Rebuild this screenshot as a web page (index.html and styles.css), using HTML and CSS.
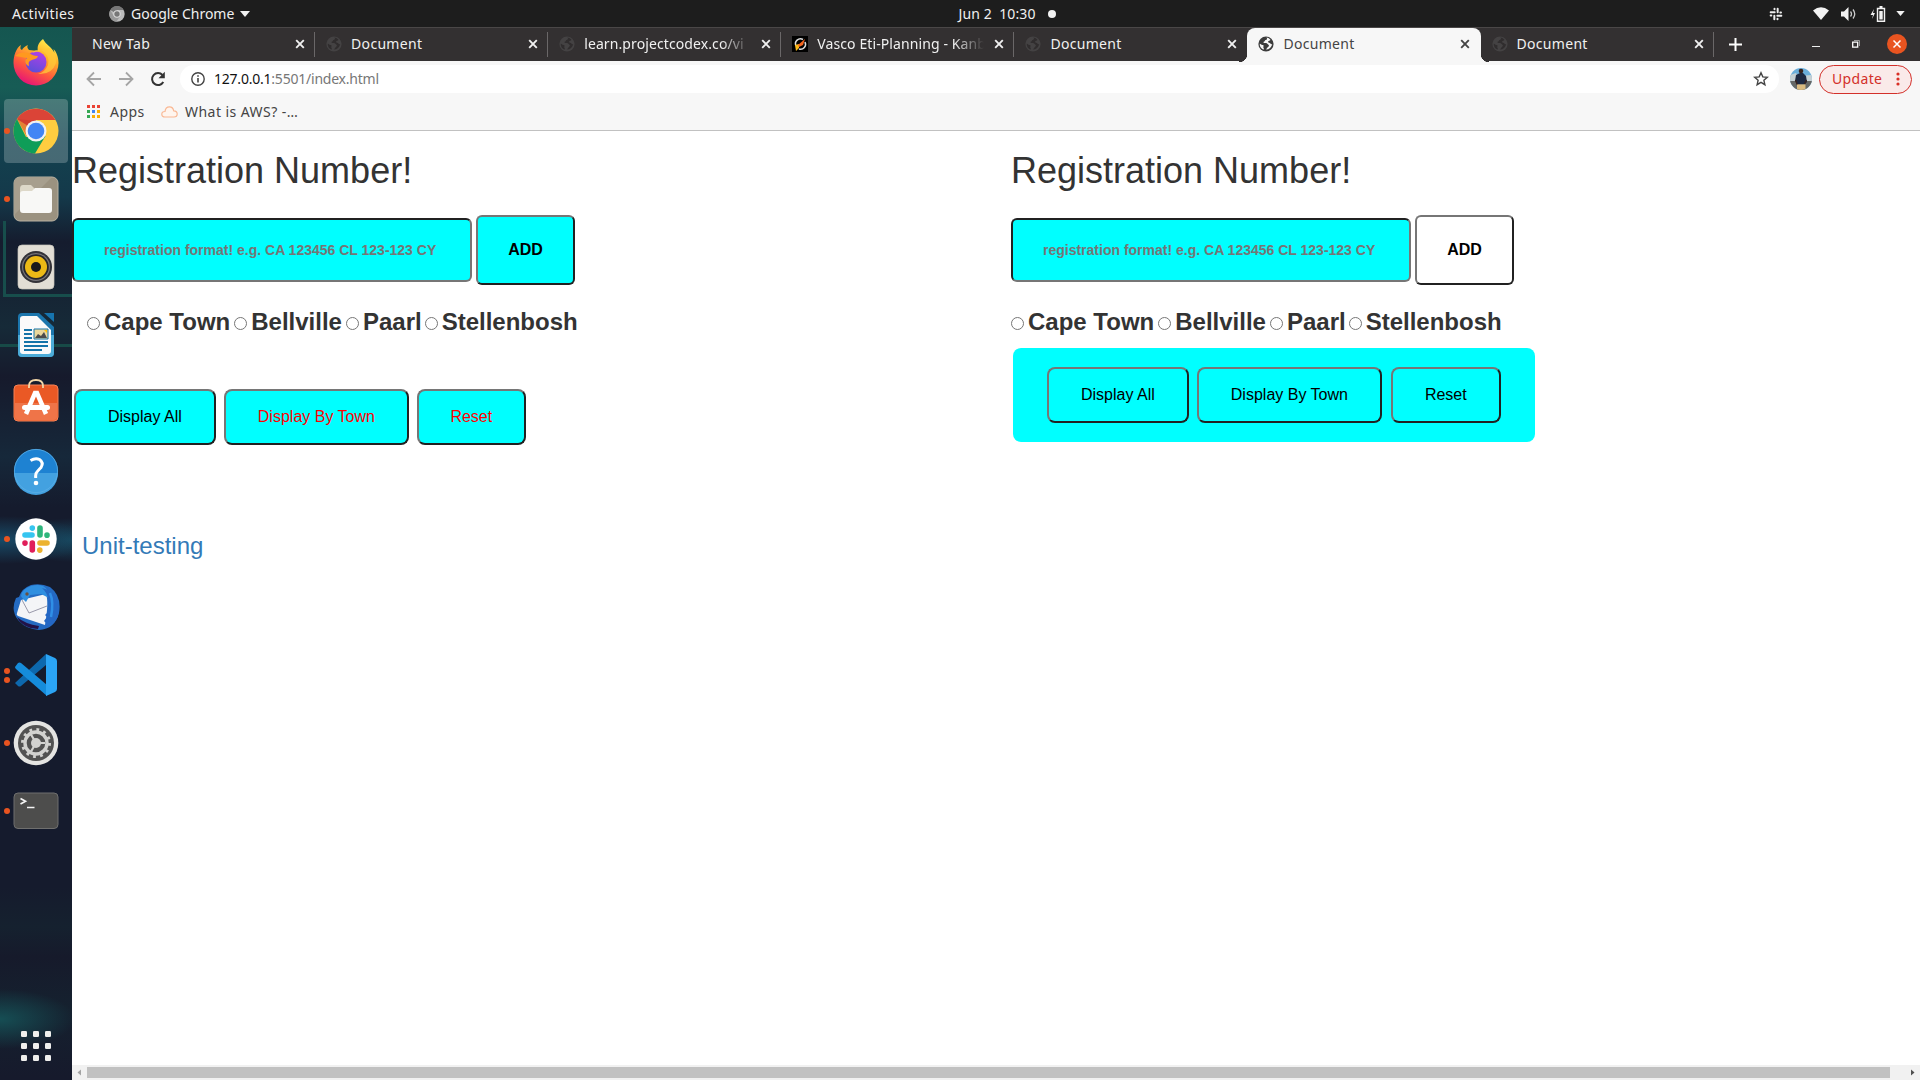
FILE: index.html
```html
<!DOCTYPE html>
<html lang="en">
<head>
<meta charset="utf-8">
<title>Document</title>
<link rel="stylesheet" href="styles.css">
</head>
<body>
<svg class="defs" width="0" height="0">
  <symbol id="globe" viewBox="0 0 16 16"><circle cx="8" cy="8" r="7.6"/><path class="land" d="M8.2 1.6c1.6 1 .7 2.1-.6 2.5-.9.3-.5 1.3-1.4 1.5-1 .2-.8 1.2-.2 1.3 1.5.1 1.6-.2 2.8.4 1 .5.9 1.3 1.7 1.5.8.3.3 1.7-.8 2.4-.8.5-.8 1.7-1.9 2.3A6.3 6.3 0 0 0 14.2 8c-.8.5-1.3.2-1.8-.5-.6-.8-2.2-.4-2.3-1.5 0-.9.9-1.3 1.7-1.4.5 0 .4-.8.5-1.1A6.3 6.3 0 0 0 8.2 1.6zM1.7 7.8c1.4.3 1.4 1.2 2.7 1.2 1.3.1 1.5.9.9 1.7-.5.7.7 1 .5 2.200-.1.7-.5.8-.6.7A6.3 6.3 0 0 1 1.7 7.8z"/></symbol>
  <symbol id="x" viewBox="0 0 12 12"><path d="M2.2 2.2l7.6 7.6M9.8 2.2l-7.600 7.600" fill="none" stroke="currentColor" stroke-width="1.900"/></symbol>
</svg>

<header class="topbar">
  <div class="topbar-left">
    <span class="activities">Activities</span>
    <svg width="16" height="16" viewBox="0 0 48 48"><circle cx="24" cy="24" r="23" fill="#bbb"/><path d="M24 24L4 12A23 23 0 0 1 44 12H24z" fill="#777"/><path d="M4 12A23 23 0 0 0 22 47L34 30 14 30z" fill="#999"/><circle cx="24" cy="24" r="11" fill="#ddd"/><circle cx="24" cy="24" r="8" fill="#777"/></svg>
    <span class="appname">Google Chrome</span>
    <svg class="caret" width="10" height="6" viewBox="0 0 10 6"><path d="M0 0h10L5 6z" fill="#f2f2f2"/></svg>
  </div>
  <div class="clock"><span>Jun 2&nbsp; 10:30</span><i></i></div>
  <div class="tray">
    <svg width="14" height="14" viewBox="3 3 42 42" fill="none" stroke="#eee" stroke-width="6" stroke-linecap="round"><path d="M8 19h12M19.500 8v2M29 8v11M39 19.500h-2M28 29h12M28.500 40v-2M19 29v11M8 28.500h2"/></svg>
    <svg class="wifi" width="16" height="13" viewBox="0 0 16 13"><path d="M0 3.500Q8-3 16 3.500L8 13z" fill="#f2f2f2"/></svg>
    <svg class="volume" width="16" height="14" viewBox="0 0 16 14"><path d="M0 4.500h3L7.500 0v14L3 9.500H0z" fill="#f2f2f2"/><path d="M9.500 4.500q2 2.500 0 5M12 2.500q3.500 4.500 0 9" fill="none" stroke="#ccc" stroke-width="1.300"/></svg>
    <svg class="battery" width="16" height="16" viewBox="0 0 16 16"><path d="M4 3L.5 9H3l-1 4 3-6H3z" fill="#f2f2f2"/><path d="M7.500 2.500h7v12.700h-7z" fill="none" stroke="#f2f2f2" stroke-width="1.400"/><path d="M9.500 0h3v2h-3zM9.300 5h3.400v8.500H9.300z" fill="#f2f2f2"/></svg>
    <svg class="caret" width="9" height="5" viewBox="0 0 10 6"><path d="M0 0h10L5 6z" fill="#f2f2f2"/></svg>
  </div>
</header>

<div class="desktop">
<nav class="dock">
  <div class="app"><svg viewBox="0 0 48 48"><defs><linearGradient id="ff" x1=".8" y1="0" x2=".3" y2="1"><stop offset="0" stop-color="#fff44f"/><stop offset=".35" stop-color="#ffb02a"/><stop offset=".65" stop-color="#ff5a3c"/><stop offset="1" stop-color="#e5107a"/></linearGradient><linearGradient id="fp" x1=".7" y1="0" x2=".3" y2="1"><stop offset="0" stop-color="#b13fe8"/><stop offset="1" stop-color="#5a4fd8"/></linearGradient></defs><path d="M31 0c-5 4-6 8-5 12l-9-1C15 9 15 7 16 6c-3 1-5 3-6 5-2-1-2-2-1-5C4 9 1.500 17 1.500 24a22.500 22.500 0 0 0 45 0c0-6-2-11-5-14l1 4C40 8 34 6 31 0z" fill="url(#ff)"/><circle cx="24" cy="23" r="10.500" fill="url(#fp)"/><path d="M3 17c4-4 9-4 14-3 3 2 5 3 9 3-1 4-6 3-8 5-2 1-1 3-1 5-4-1-5-6-2-8-4-1-8-1-12-2z" fill="#ff991f"/><path d="M20 14q5-6 12-1 6 5 4 13-3 7-10 9 14 1 18-11 1-10-7-15z" fill="#ffca3a" opacity=".75"/></svg></div>
  <div class="app active"><i class="run"></i><svg viewBox="0 0 48 48"><circle cx="24" cy="24" r="22.500" fill="#ffcd40"/><path d="M24 24L5 12A22.500 22.500 0 0 1 43.500 13H24z" fill="#db4437"/><path d="M5 12A22.500 22.500 0 0 0 23 46.500L33.500 29 14 30z" fill="#0f9d58"/><path d="M5 12L15 30 24 14z" fill="#c8382c" opacity=".5"/><circle cx="24" cy="24" r="10.500" fill="#f1f1f1"/><circle cx="24" cy="24" r="8.300" fill="#4285f4"/></svg></div>
  <div class="app"><i class="run"></i><svg viewBox="0 0 48 48"><rect x="2" y="2" width="44" height="44" rx="6" fill="#9b9280" stroke="#b9b2a2"/><path d="M2 40L40 2h-32q-6 0-6 6z" fill="#a79f8e"/><path d="M8 14q0-4 3-4h8l4 4h14v8H8z" fill="#ddd8c8"/><path d="M8 19q0-3 3-3h9l3-3h14q3 0 3 3v19q0 3-3 3H11q-3 0-3-3z" fill="#f8f8f6"/></svg></div>
  <div class="app"><svg viewBox="0 0 48 48"><rect x="6" y="2" width="36" height="44" rx="4" fill="#e2ded5" stroke="#c9c5bc" stroke-width=".7"/><circle cx="24" cy="24" r="16" fill="#333238"/><circle cx="24" cy="24" r="14" fill="#77757a"/><circle cx="24" cy="24" r="12.800" fill="#28262b"/><circle cx="24" cy="24" r="11" fill="#ecb916"/><circle cx="24" cy="24" r="5" fill="#18191c"/></svg></div>
  <div class="app"><svg viewBox="0 0 48 48"><path d="M10 2h17l15 14v26q0 4-4 4H10q-4 0-4-4V6q0-4 4-4z" fill="#1b76ad"/><path d="M6 24h36v18q0 4-4 4H10q-4 0-4-4z" fill="#4cacd8"/><path d="M32 2h10v9z" fill="#1674ae"/><path d="M11 5h14l14 14v21q0 3-3 3H11q-3 0-3-3V8q0-3 3-3z" fill="#fafafa"/><path d="M12 19h8M12 23h8M12 27h8M12 31h24M12 35h24M12 39h18" stroke="#1574a9" stroke-width="1.800"/><path d="M22 18h14v10H22z" fill="#ead79b" stroke="#1574a9"/><path d="M23 27l3-4 3 2 3-4 3 6z" fill="#4b4b4b"/><path d="M32 19h3v3z" fill="#ffc107"/></svg></div>
  <div class="app"><svg viewBox="0 0 48 48"><rect x="2" y="6" width="44" height="36" rx="4" fill="#ea5925" stroke="#f58257"/><path d="M3 24h42v14q0 3-3 3H6q-3 0-3-3z" fill="#ef7448"/><path d="M17 9V7q0-6 7-6t7 6v2" fill="none" stroke="#f4d7a8" stroke-width="1.800"/><path d="M14 35l9-21h2l9 21" fill="none" stroke="#fff" stroke-width="4.500"/><rect x="10" y="26" width="28" height="5" rx="2.500" fill="#fff"/></svg></div>
  <div class="app"><svg viewBox="0 0 48 48"><circle cx="24" cy="24" r="22" fill="#1e82d2"/><path d="M2 26h44a22 22 0 0 1-44 0z" fill="#43a1e0"/><circle cx="24" cy="24" r="21.600" fill="none" stroke="#5baee6" stroke-width=".8"/><path d="M18.500 13.500q5-3 9-1 4.500 3 1.500 8-4 4-5 6-.5 2-.3 4.500" fill="none" stroke="#fff" stroke-width="3"/><circle cx="24" cy="36" r="2.300" fill="#fff"/></svg></div>
  <div class="app"><i class="run"></i><svg viewBox="0 0 48 48"><circle cx="24" cy="24" r="20.700" fill="#fff"/><g stroke-width="5.600" stroke-linecap="round" fill="none"><path d="M13 20h7M20.300 13v.1" stroke="#36c5f0"/><path d="M28 13v7M35 20.100v.1" stroke="#2eb67d"/><path d="M28 28h7M27.800 35v.1" stroke="#ecb22e"/><path d="M20.300 28v7M13 28v.1" stroke="#e01e5a"/></g></svg></div>
  <div class="app"><svg viewBox="0 0 48 48"><path d="M4 15q-6 13 3 23 7 8 20 9 16-1 20-17Q50 13 38 4q-9-4-19-2-9 3-12 12z" fill="#246bc2"/><path d="M5 34q8 7 22 9l-1 3Q10 45 5 34z" fill="#221247"/><path d="M9 17l25-6q3 8-1 31L6 33q-2-1-1-3z" fill="#f4f5f7"/><path d="M10 17l7 13 18-7" fill="none" stroke="#99a" stroke-width="1"/><path d="M19 3q-9 3-10 10 1 2 5 6l4-7 11-1 8 4q1-8-6-12-5-2-12 0z" fill="#2f8fe0"/><path d="M30 5q9 8 6 24l-3 3 2 2-3 4 2 2-1 5q13-5 14-17Q47 9 30 5z" fill="#2467c4"/><path d="M38 10q4 9 1 24" fill="none" stroke="#2f8fe6" stroke-width="2.500"/><circle cx="15" cy="11" r="1.700" fill="#6b5140"/></svg></div>
  <div class="app"><i class="run two"></i><svg viewBox="0 0 48 48"><path d="M3 32l3 3q1.500 1 3 0L34 14V3z" fill="#0d68ad"/><path d="M3 16l3-4q1.500-1 3 0l26 22v11L4 18q-1-1-1-2z" fill="#158cdb"/><path d="M34 3l9 4q2 1 2 3v28q0 2-2 3l-9 4z" fill="#2ba4f4"/></svg></div>
  <div class="app"><i class="run"></i><svg viewBox="0 0 48 48"><circle cx="24" cy="24" r="22.300" fill="#e4e4e2"/><circle cx="24" cy="24" r="18" fill="#525252"/><circle cx="24" cy="24" r="11" fill="none" stroke="#d2d2d0" stroke-width="3.400"/><circle cx="24" cy="24" r="13.500" fill="none" stroke="#d2d2d0" stroke-width="3" stroke-dasharray="2.800 4.270"/><path d="M24 24h9M24 24l-5-8.500M24 24l-5 8.500" stroke="#d2d2d0" stroke-width="2.200"/><circle cx="24" cy="24" r="5" fill="#d2d2d0"/></svg></div>
  <div class="app"><i class="run"></i><svg viewBox="0 0 48 48"><rect x="2" y="6" width="44" height="35.500" rx="4" fill="#4d4d4c" stroke="#6f6f6e"/><path d="M8.500 11.500l5 2.800-5 2.800M15 20.500h7.500" fill="none" stroke="#f4f4f4" stroke-width="1.700"/></svg></div>
  <div class="app grid"><svg viewBox="0 0 48 48" fill="#efefed"><g id="r"><rect x="9" y="9" width="6" height="6" rx="1.300"/><rect x="21" y="9" width="6" height="6" rx="1.300"/><rect x="33" y="9" width="6" height="6" rx="1.300"/></g><use href="#r" y="12"/><use href="#r" y="24"/></svg></div>
</nav>

<main class="browser">
  <div class="tabs">
    <div class="tab"><span>New Tab</span><svg class="close"><use href="#x"/></svg></div>
    <div class="tab"><svg class="fav"><use href="#globe"/></svg><span>Document</span><svg class="close"><use href="#x"/></svg></div>
    <div class="tab"><svg class="fav"><use href="#globe"/></svg><span class="fade tight">learn.projectcodex.co/vi</span><svg class="close"><use href="#x"/></svg></div>
    <div class="tab"><svg class="fav" viewBox="0 0 16 16"><path d="M0 0h16v16H0z" fill="#000"/><path d="M4 10A5 5 0 0 1 11 3.500M13 6A5 5 0 0 1 7 13" fill="none" stroke="#ddd" stroke-width="1.500"/><path d="M3 9l4-1v4l-3 3z" fill="#fbb917"/><path d="M6 9l7-6-2 6-4 2z" fill="#f4641e"/></svg><span class="fade tight">Vasco Eti-Planning - Kanb</span><svg class="close"><use href="#x"/></svg></div>
    <div class="tab last"><svg class="fav"><use href="#globe"/></svg><span>Document</span><svg class="close"><use href="#x"/></svg></div>
    <div class="tab current"><svg class="fav"><use href="#globe"/></svg><span>Document</span><svg class="close"><use href="#x"/></svg></div>
    <div class="tab"><svg class="fav"><use href="#globe"/></svg><span>Document</span><svg class="close"><use href="#x"/></svg></div>
    <svg class="plus" width="13" height="13" viewBox="0 0 13 13"><path d="M6.500 0v13M0 6.500h13" stroke="#fff" stroke-width="2"/></svg>
    <div class="controls">
      <svg width="8" height="20" viewBox="0 0 8 20"><path d="M0 12.500h8" stroke="#eee"/></svg>
      <svg width="8" height="8" viewBox="0 0 8 8" fill="none"><path d="M.7 2.200h5v5h-5z" stroke="#fff" stroke-width="1.300"/><path d="M2 .5h5.500V6" stroke="#999"/></svg>
      <svg width="20" height="20" viewBox="0 0 20 20"><circle cx="10" cy="10" r="10" fill="#e95420"/><path d="M6.500 6.500l7 7M13.500 6.500l-7 7" stroke="#fff" stroke-width="1.500"/></svg>
    </div>
  </div>
  <div class="toolbar">
    <svg class="nav" viewBox="0 0 16 16"><path d="M15 8H2M8 1.500L1.500 8 8 14.500" stroke="#a5a5a5"/></svg>
    <svg class="nav" viewBox="0 0 16 16"><path d="M1 8h13M8 1.500L14.500 8 8 14.500" stroke="#a5a5a5"/></svg>
    <svg class="nav" viewBox="0 0 16 16"><path d="M13.300 11A6 6 0 1 1 12.500 4" stroke="#333" stroke-width="2"/><path d="M14.800.8v6.400H8.500z" fill="#333"/></svg>
    <div class="omnibox">
      <svg width="14" height="14" viewBox="0 0 14 14"><circle cx="7" cy="7" r="6.200" fill="none" stroke="#444" stroke-width="1.400"/><path d="M7 6v4.500M7 3.300v1.500" stroke="#444" stroke-width="1.600"/></svg>
      <span class="url"><b>127.0.0.1</b>:5501/index.html</span>
      <svg width="16" height="16" viewBox="0 0 16 16"><path d="M8 1.800l1.800 4.100 4.500.4-3.400 3 1 4.400L8 11.400l-3.900 2.300 1-4.400-3.400-3 4.500-.4z" fill="none" stroke="#444" stroke-width="1.400"/></svg>
    </div>
    <svg class="avatar" width="22" height="22" viewBox="0 0 22 22"><defs><clipPath id="ac"><circle cx="11" cy="11" r="11"/></clipPath></defs><g clip-path="url(#ac)"><path d="M0 0h22v22H0z" fill="#6aaedb"/><path d="M0 7l6-2 2 3 14-1v8H0z" fill="#c5d0d4"/><path d="M0 13h22v9H0z" fill="#656765"/><path d="M6 7l4-2h3l3 3 1 6-2 2H7l-2-3z" fill="#1d2942"/><path d="M5.500 12l2 5M16.500 12l-2 4" stroke="#38241f" stroke-width="1.500"/><circle cx="11" cy="3" r="2.300" fill="#38241f"/><path d="M7 16.500h8.500V22H7z" fill="#d9ba80"/></g></svg>
    <div class="update"><span>Update</span><svg width="4" height="14" viewBox="0 0 4 14" fill="#d93025"><circle cx="2" cy="2" r="1.600"/><circle cx="2" cy="7" r="1.600"/><circle cx="2" cy="12" r="1.600"/></svg></div>
  </div>
  <div class="bookmarks">
    <svg width="13" height="13" viewBox="0 0 13 13"><path d="M0 0h3v3H0zM5 0h3v3H5zM10 0h3v3h-3z" fill="#ea4335"/><path d="M0 5h3v3H0zM0 10h3v3H0z" fill="#34a853"/><path d="M5 5h3v3H5z" fill="#4285f4"/><path d="M10 5h3v3h-3zM5 10h3v3H5zM10 10h3v3h-3z" fill="#fbad05"/></svg>
    <span class="bm-apps">Apps</span>
    <svg width="17" height="12" viewBox="0 0 17 12"><path d="M4 11Q.8 11 .8 8.200T4 5.500Q4.500.8 8.500.8q3.500 0 4.200 4 3.500.2 3.500 3.200t-3.200 3z" fill="#fff5ee" stroke="#f9b894" stroke-width="1.200"/></svg>
    <span class="bm-aws">What is AWS? -…</span>
  </div>

  <div class="page">
    <section class="col">
      <h1>Registration Number!</h1>
      <div class="entry"><input class="reg" type="text" placeholder="registration format! e.g. CA 123456 CL 123-123 CY"><button class="add">ADD</button></div>
      <div class="towns inset"><input type="radio" name="a"><span>Cape Town</span><input type="radio" name="a"><span>Bellville</span><input type="radio" name="a"><span>Paarl</span><input type="radio" name="a"><span>Stellenbosh</span></div>
      <div class="actions"><button>Display All</button><button class="red">Display By Town</button><button class="red reset">Reset</button></div>
      <a class="unit">Unit-testing</a>
    </section>
    <section class="col">
      <h1>Registration Number!</h1>
      <div class="entry"><input class="reg" type="text" placeholder="registration format! e.g. CA 123456 CL 123-123 CY"><button class="add white">ADD</button></div>
      <div class="towns"><input type="radio" name="b"><span>Cape Town</span><input type="radio" name="b"><span>Bellville</span><input type="radio" name="b"><span>Paarl</span><input type="radio" name="b"><span>Stellenbosh</span></div>
      <div class="actions panel"><button>Display All</button><button>Display By Town</button><button class="reset">Reset</button></div>
    </section>
  </div>
  <div class="scrollbar">
    <svg width="15" height="15" viewBox="0 0 15 15"><path d="M9 4.500v6L5.500 7.500z" fill="#a3a3a3"/></svg>
    <div class="thumb"></div>
    <svg width="15" height="15" viewBox="0 0 15 15"><path d="M6 4.500v6L9.500 7.500z" fill="#505050"/></svg>
  </div>
</main>
</div>
</body>
</html>
```
FILE: styles.css
```css
* { box-sizing: border-box; }
body {
  margin: 0;
  width: 1920px;
  height: 1080px;
  overflow: hidden;
  display: flex;
  flex-direction: column;
  background: #fff;
  font: 14px/20px "Noto Sans", sans-serif;
}
svg { display: block; flex: none; }
.defs { position: absolute; }

/* system bar */
.topbar {
  height: 27px;
  flex: none;
  display: grid;
  grid-template-columns: 1fr auto 1fr;
  align-items: center;
  background: #1d1d1d;
  color: #f0f0f0;
}
.topbar-left { display: flex; align-items: center; padding-left: 12px; }
.activities { width: 97px; letter-spacing: .4px; }
.appname { width: 104px; margin: 0 5px 0 6px; white-space: nowrap; }
.clock { display: flex; align-items: center; gap: 12px; padding-left: 95px; width: 193px; white-space: nowrap; }
.clock span { width: 77px; letter-spacing: .1px; }
.clock i { width: 8px; height: 8px; flex: none; border-radius: 50%; background: #f2f2f2; }
.tray { display: flex; align-items: center; justify-content: flex-end; padding-right: 15px; }
.wifi { margin-left: 30px; }
.volume { margin-left: 12px; }
.battery { margin-left: 13px; }
.tray .caret { margin-left: 10px; }

.desktop { flex: 1; display: flex; min-height: 0; }

/* dock */
.dock {
  width: 72px;
  flex: none;
  display: flex;
  flex-direction: column;
  gap: 4px;
  padding: 4px 4px 2px;
  background:
    linear-gradient(#174e4c, #174e4c) 3px 194px / 3px 76px no-repeat,
    linear-gradient(#174e4c, #174e4c) 3px 267px / 69px 3px no-repeat,
    linear-gradient(#174a47, #174a47) 0 317px / 72px 3px no-repeat,
    radial-gradient(ellipse 75px 30px at 0 992px, #164e54, transparent),
    radial-gradient(ellipse 90px 24px at 0 513px, #184a66, transparent),
    radial-gradient(ellipse 60px 22px at 72px 513px, #17465c, transparent),
    linear-gradient(#155650 0, #175c55 60px, #134350 110px, #14394a 170px, #151c2e 215px, #162a38 300px, #161a2c 350px, #16283a 430px, #151b2d 480px, #151b2d 860px, #15212f 900px, #161a2b 930px, #15212f 980px, #161a2c 1050px);
}
.app { position: relative; height: 64px; flex: none; display: grid; place-items: center; border-radius: 4px; }
.app svg { width: 48px; height: 48px; }
.app.active { background: rgba(255, 255, 255, .22); }
.app.grid { margin-top: auto; }
.run { position: absolute; left: 0; top: 29px; width: 6px; height: 6px; border-radius: 50%; background: #e95420; }
.run.two { top: 25px; box-shadow: 0 9px #e95420; }

/* browser frame */
.browser { flex: 1; min-width: 0; display: flex; flex-direction: column; }
.tabs {
  height: 34px;
  flex: none;
  display: flex;
  align-items: center;
  padding: 0 0 1px 10px;
  background: #333031;
  border-top: 1px solid #4a4747;
  color: #f0f0f0;
}
.tab {
  width: 233.1px;
  height: 25px;
  flex: none;
  display: flex;
  align-items: center;
  padding: 0 8px 0 11px;
  border-right: 1px solid #6a6768;
  letter-spacing: .3px;
}
.tab:first-child { padding-left: 10px; }
.tab span { flex: 1; min-width: 0; white-space: nowrap; margin-right: 9px; }
.tab .tight { letter-spacing: .1px; }
.fade { -webkit-mask-image: linear-gradient(90deg, #000 82%, transparent); mask-image: linear-gradient(90deg, #000 82%, transparent); }
.fav { width: 16px; height: 16px; margin-right: 9px; fill: #444243; --land: #302d2e; }
.land { fill: var(--land); }
.close { width: 12px; height: 12px; }
.last { border-color: transparent; }
.tab.current {
  position: relative;
  height: 34px;
  margin-bottom: -1px;
  padding: 0 10px 1px 11px;
  background: #f7f7f7;
  border: 0;
  border-radius: 8px 8px 0 0;
  color: #444;
}
.tab.current::before, .tab.current::after {
  content: "";
  position: absolute;
  bottom: 0;
  left: -8px;
  width: 8px;
  height: 8px;
  background: radial-gradient(circle at 0 0, #333031 8px, #f7f7f7 8.500px);
}
.tab.current::after { left: auto; right: -8px; background: radial-gradient(circle at 100% 0, #333031 8px, #f7f7f7 8.500px); }
.current .fav { fill: #3c3c3c; --land: #f7f7f7; }
.plus { margin-left: 15px; }
.controls { margin-left: auto; display: flex; align-items: center; padding-right: 13px; }
.controls svg:nth-child(2) { margin: 0 27px 0 32px; }

.toolbar { height: 36px; flex: none; display: flex; align-items: center; padding-left: 14px; background: #f7f7f7; }
.nav { width: 16px; height: 16px; margin-right: 16px; fill: none; stroke-width: 1.800; }
.nav:nth-child(3) { margin-right: 14px; }
.omnibox { width: 1599px; height: 28px; display: flex; align-items: center; padding: 0 10px 0 11px; background: #fff; border-radius: 14px; }
.url { flex: 1; margin-left: 9px; color: #777; letter-spacing: -.22px; }
.url b { font-weight: 400; color: #111; }
.avatar { margin-left: 11px; }
.update {
  width: 93px;
  height: 29px;
  margin-left: 7px;
  display: flex;
  align-items: center;
  justify-content: space-between;
  padding: 0 11px 0 12px;
  background: #faeae9;
  border: 1px solid #d3302a;
  border-radius: 15px;
  color: #d3302a;
  letter-spacing: .35px;
}
.bookmarks { height: 34px; flex: none; display: flex; align-items: center; padding: 0 15px 4px; background: #f7f7f7; border-bottom: 1px solid #c1c1c1; color: #444; letter-spacing: .45px; }
.bm-apps { width: 34px; margin: 0 17px 0 10px; }
.bm-aws { margin-left: 7px; }

/* page */
.page { flex: 1; display: grid; grid-template-columns: 939px 1fr; font-family: "Liberation Sans", Arial, sans-serif; color: #333; }
.col { display: flex; flex-direction: column; align-items: flex-start; }
h1 { margin: 20px 0 0; font-size: 36px; font-weight: 500; line-height: 39px; }
.entry { display: flex; align-items: center; gap: 4px; height: 70px; margin-top: 25px; }
.reg, .page button { margin: 0; border: 2px solid; border-color: #767676 #212121 #212121 #767676; background: aqua; font-family: inherit; }
.reg { width: 400px; height: 64px; padding: 0 30px; border-color: #212121 #767676 #767676 #212121; border-radius: 6px; font-size: 14px; font-weight: 700; }
.reg::placeholder { color: #757575; }
.page .add { width: 99px; height: 70px; padding: 0; border-radius: 6px; font-size: 16px; font-weight: 700; color: #000; }
.page .white { background: #fff; }
.towns { display: flex; align-items: center; height: 30px; margin-top: 22px; font-size: 24px; font-weight: 700; line-height: 30px; white-space: nowrap; }
.towns.inset { margin-left: 15px; }
.towns input { width: 13px; height: 13px; margin: 2px 4px 0 0; }
.towns span { margin-right: 4px; }
.towns span:nth-of-type(3) { margin-right: 3px; }
.actions { display: flex; gap: 8px; margin: 52px 0 0 2px; }
.actions button { height: 56px; padding: 0 32px; border-radius: 8px; font-size: 16px; color: #000; }
.actions .red { color: red; }
.actions .red.reset { padding: 0 31.500px; }
.panel { width: 522px; height: 94px; margin-top: 11px; padding: 19px 0 0 34px; border-radius: 8px; background: aqua; }
.panel .reset { margin-left: 1px; }
.unit { margin: 86px 0 0 10px; font-size: 24px; line-height: 30px; color: #337ab7; }

.scrollbar { height: 15px; flex: none; display: flex; align-items: center; justify-content: space-between; background: #f1f1f1; }
.thumb { width: 1803px; height: 11px; margin-right: auto; background: #c1c1c1; }
```
